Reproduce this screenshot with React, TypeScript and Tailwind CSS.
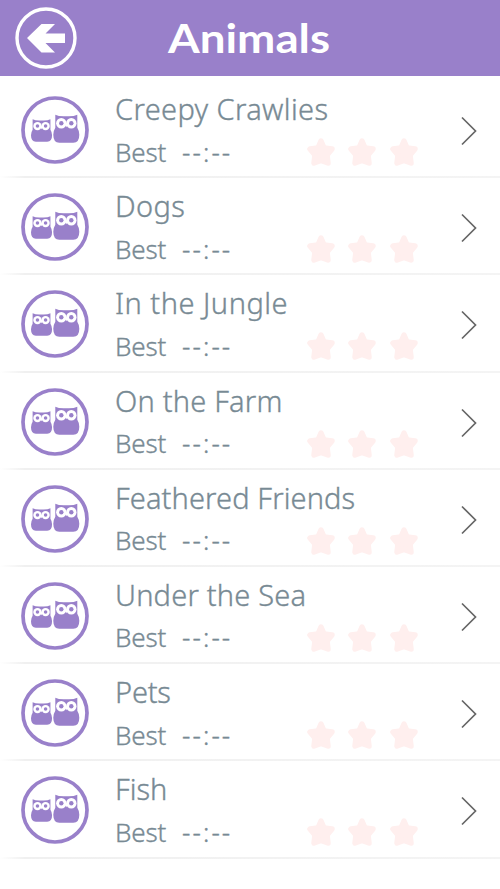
import React from "react";

type Category = { title: string; tracking: string };

const categories: Category[] = [
  { title: "Creepy Crawlies", tracking: "tracking-[0.38px]" },
  { title: "Dogs", tracking: "tracking-[0.4px]" },
  { title: "In the Jungle", tracking: "tracking-[0.5px]" },
  { title: "On the Farm", tracking: "tracking-[0.2px]" },
  { title: "Feathered Friends", tracking: "tracking-[0.12px]" },
  { title: "Under the Sea", tracking: "tracking-[0.2px]" },
  { title: "Pets", tracking: "tracking-[-0.2px]" },
  { title: "Fish", tracking: "tracking-[0px]" },
];

const BackIcon = () => (
  <svg width="62" height="62" viewBox="0 0 62 62" fill="none">
    <circle cx="31" cy="31" r="29" stroke="white" strokeWidth="3.4" />
    <path d="M12 31 26.500 17H40l-9.500 9.500H50v9.500H30.500L40 45.500H26.500Z" fill="white" />
  </svg>
);

const Owl = () => (
  <>
    <path
      d="M2 0Q6 2 13 1.500Q20 2 24 0V13Q26 16 26 20Q26 28 20 28H6Q0 28 0 20Q0 16 2 13Z"
      fill="#9980ca"
    />
    <circle cx="8" cy="8.500" r="5.200" fill="white" />
    <circle cx="18" cy="8.500" r="5.200" fill="white" />
    <path d="M11 8.500 13 12.500 15 8.500Z" fill="white" />
    <circle cx="8" cy="8.500" r="2.200" fill="#9980ca" />
    <circle cx="18" cy="8.500" r="2.200" fill="#9980ca" />
  </>
);

const OwlBadge = () => (
  <svg width="68" height="68" viewBox="0 0 68 68" className="shrink-0">
    <circle cx="34" cy="34" r="32" fill="white" stroke="#9980ca" strokeWidth="3.700" />
    <g transform="translate(10 23.300) scale(.81 .8)">
      <Owl />
    </g>
    <g transform="translate(32.300 18.700)">
      <Owl />
    </g>
  </svg>
);

const Star = () => (
  <svg width="30" height="30" viewBox="0 0 30 30">
    <path
      d="M15 4 18 11 26 12 21 18 22 26 15 23.500 8 26 9 18 4 12 12 11Z"
      fill="#ffefee"
      stroke="#ffefee"
      strokeWidth="5.500"
      strokeLinejoin="round"
    />
  </svg>
);

const CategoryRow = ({ category }: { category: Category }) => {
  return (
    <li className="flex h-[97.2px] flex-col">
      <div className="flex grow items-start pl-[21px] pt-[15px]">
        <OwlBadge />
        <div className="ml-[26px] w-[304px]">
          <h2 className={`h-[41px] whitespace-nowrap text-[29px] leading-[26px] ${category.tracking}`}>
            {category.title}
          </h2>
          <div className="flex h-[30px] items-center text-[26px]">
            <span className="w-[67px] tracking-[-0.2px]">Best</span>
            <span className="tracking-[2.1px]">--:--</span>
            <div className="ml-auto flex gap-[11.7px]">
              <Star />
              <Star />
              <Star />
            </div>
          </div>
        </div>
        <svg className="ml-[41px] mt-[19px]" width="18" height="32" viewBox="0 0 18 32" fill="none">
          <path d="M2 2.500 15.500 16 2 29.500" stroke="#666" strokeWidth="1.700" />
        </svg>
      </div>
      <div className="h-[2px] shrink-0 bg-linear-to-r from-white via-[#f0f0f0] via-5% to-[#f4f4f4]" />
    </li>
  );
};

export default function App() {
  return (
    <div className="min-h-[889px] w-[500px] bg-white font-['Noto_Sans',sans-serif] text-[#788a94]">
      <header className="flex h-[76px] bg-[#9980ca] pl-[15px] pt-[7px]">
        <BackIcon />
        <h1 className="ml-[91px] origin-left scale-x-[1.115] font-['Lato',sans-serif] text-[41px] font-bold leading-[62px] text-white">
          Animals
        </h1>
      </header>
      <ul className="pt-[5px] font-light [-webkit-text-stroke:0.35px_#788a94]">
        {categories.map((category) => (
          <CategoryRow key={category.title} category={category} />
        ))}
      </ul>
    </div>
  );
}
